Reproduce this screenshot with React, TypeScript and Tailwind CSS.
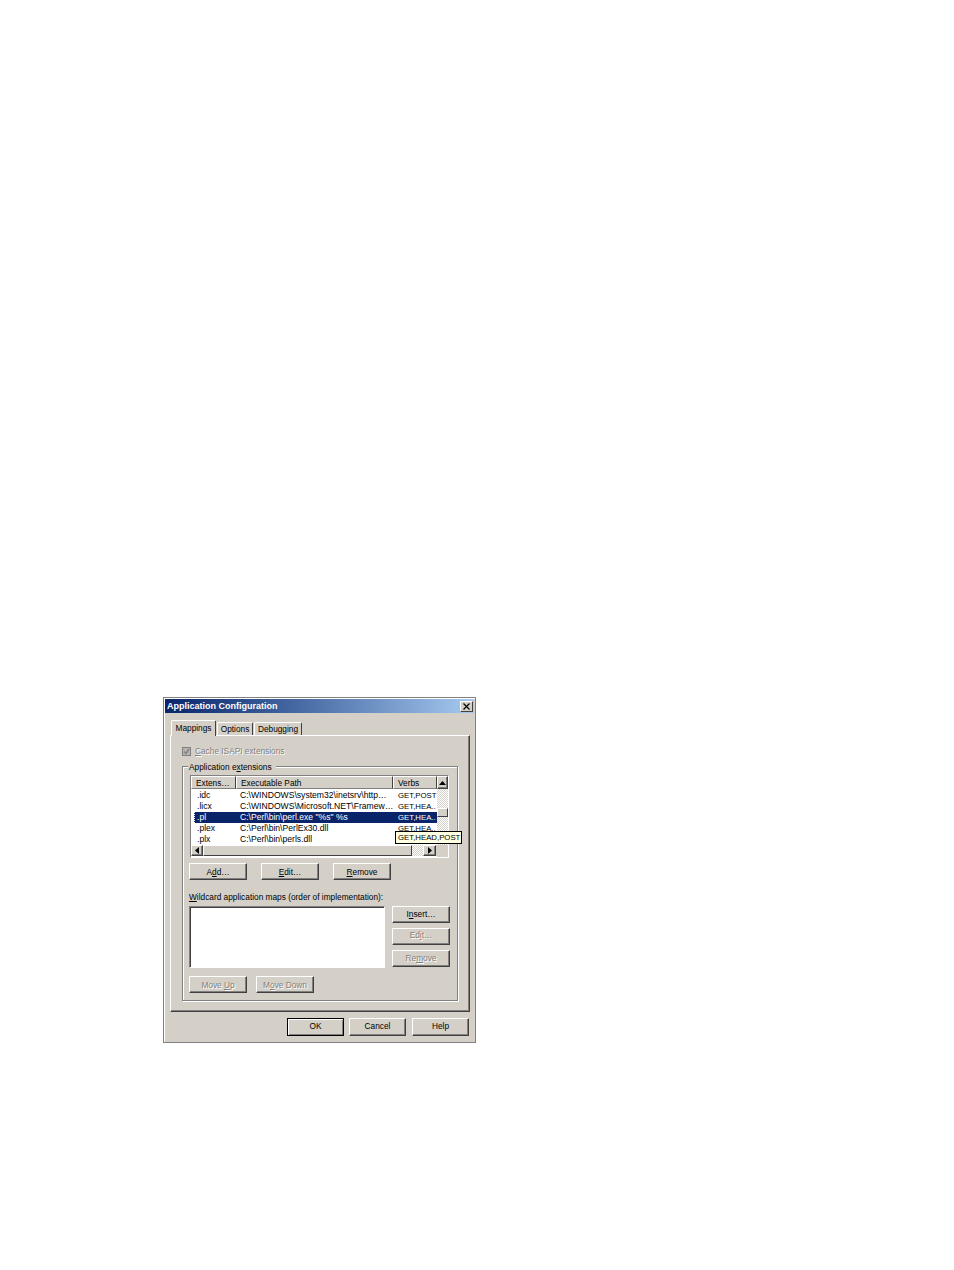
import type { ReactNode } from "react";

const FACE = "bg-[#d4d0c8]";
const DISABLED = "text-[#808080] [text-shadow:1px_1px_0_#ffffff]";

const rows = [
  { ext: ".idc", path: "C:\\WINDOWS\\system32\\inetsrv\\http…", verbs: "GET,POST" },
  { ext: ".licx", path: "C:\\WINDOWS\\Microsoft.NET\\Framew…", verbs: "GET,HEA.." },
  { ext: ".pl", path: "C:\\Perl\\bin\\perl.exe \"%s\" %s", verbs: "GET,HEA..", selected: true },
  { ext: ".plex", path: "C:\\Perl\\bin\\PerlEx30.dll", verbs: "GET,HEA.." },
  { ext: ".plx", path: "C:\\Perl\\bin\\perls.dll", verbs: "" },
];

function Btn({
  children,
  className = "w-[58px] h-[17px] pt-[2px]",
  disabled,
  isDefault,
}: {
  children: ReactNode;
  className?: string;
  disabled?: boolean;
  isDefault?: boolean;
}) {
  return (
    <div
      className={`flex shrink-0 items-center justify-center ${FACE} ${className} ${
        isDefault
          ? "border border-black [box-shadow:inset_1px_1px_0_#ffffff,inset_-1px_-1px_0_#808080]"
          : "border border-t-white border-l-white border-r-[#404040] border-b-[#404040] [box-shadow:inset_-1px_-1px_0_#808080]"
      } ${disabled ? DISABLED : ""}`}
    >
      <span>{children}</span>
    </div>
  );
}

function Arrow({ dir }: { dir: "up" | "left" | "right" }) {
  const points = dir === "up" ? "0,4 7,4 3.5,0" : dir === "left" ? "4,0 4,7 0,3.5" : "0,0 0,7 4,3.5";
  const size = dir === "up" ? "w-[7px] h-[4px]" : "w-[4px] h-[7px]";
  return (
    <svg className={size} viewBox={dir === "up" ? "0 0 7 4" : "0 0 4 7"}>
      <polygon points={points} fill="#000000" />
    </svg>
  );
}

function ScrollBtn({ dir, className }: { dir: "up" | "left" | "right"; className: string }) {
  return (
    <div
      className={`flex shrink-0 items-center justify-center ${FACE} ${className} border border-t-white border-l-white border-r-[#404040] border-b-[#404040] [box-shadow:inset_-1px_-1px_0_#808080]`}
    >
      <Arrow dir={dir} />
    </div>
  );
}

function HeaderCell({ children, className }: { children: ReactNode; className: string }) {
  return (
    <div
      className={`flex h-[13px] shrink-0 items-center pl-[4px] pt-px border-t border-l border-t-white border-l-white border-r border-r-[#404040] border-b border-b-[#808080] ${className}`}
    >
      {children}
    </div>
  );
}

function ExtensionList() {
  const dither = "bg-[repeating-conic-gradient(#ffffff_0%_25%,#d4d0c8_0%_50%)] bg-[length:2px_2px]";
  return (
    <div className="relative ml-px h-[83px] w-[259px] border border-t-[#808080] border-l-[#808080] border-r-white border-b-white bg-white">
      <div className="flex h-full">
        <div className="flex w-[246px] flex-col">
          <div className={`flex ${FACE}`}>
            <HeaderCell className="w-[45px]">Extens…</HeaderCell>
            <HeaderCell className="w-[157px]">Executable Path</HeaderCell>
            <HeaderCell className="w-[44px]">Verbs</HeaderCell>
          </div>
          <div className="flex flex-col pt-px text-[8.6px]">
            {rows.map((r) => (
              <div key={r.ext} className="flex h-[11px] items-center pl-[3px] leading-none">
                <div
                  className={`flex h-full w-[243px] items-center overflow-hidden ${
                    r.selected ? "border-l border-dotted border-white bg-[#0a246a] text-white" : "border-l border-transparent"
                  }`}
                >
                  <span className="w-[45px] shrink-0 pl-[2px]">{r.ext}</span>
                  <span className="w-[158px] shrink-0 whitespace-nowrap">{r.path}</span>
                  <span className="whitespace-nowrap text-[7.8px]">{r.verbs}</span>
                </div>
              </div>
            ))}
          </div>
          <div className={`mt-auto mb-px flex h-[11px] ${FACE}`}>
            <ScrollBtn dir="left" className="w-[12px]" />
            <div className={`w-[209px] shrink-0 ${FACE} border border-t-white border-l-white border-r-[#404040] border-b-[#404040]`} />
            <div className={`w-[11px] shrink-0 ${dither}`} />
            <ScrollBtn dir="right" className="w-[13px]" />
          </div>
        </div>
        <div className="flex w-[12px] flex-col">
          <ScrollBtn dir="up" className="h-[13px]" />
          <div className={`h-[19px] ${dither}`} />
          <div className={`h-[9px] ${FACE} border border-t-white border-l-white border-r-[#404040] border-b-[#404040]`} />
          <div className={`flex-1 ${dither}`} />
          <div className={`h-[12px] ${FACE}`} />
        </div>
      </div>
      <div className="absolute left-[204px] top-[55px] flex h-[13px] w-[67px] items-center whitespace-nowrap border border-black bg-[#ffffe1] pl-[2px] text-[7.8px]">
        GET,HEAD,POST
      </div>
    </div>
  );
}

function Tab({ children, active, className }: { children: ReactNode; active?: boolean; className: string }) {
  return (
    <div
      className={`flex shrink-0 items-center justify-center rounded-t-[2px] border-t border-l border-t-white border-l-white border-r border-r-[#404040] ${FACE} ${className} ${
        active ? "relative z-10 -mb-px h-[16px]" : "h-[13px]"
      }`}
    >
      {children}
    </div>
  );
}

export default function App() {
  return (
    <div
      className="min-h-[1270px] bg-white pl-[163px] pt-[697px] text-[8.3px] leading-none text-black"
      style={{ fontFamily: '"Liberation Sans", Arial, sans-serif' }}
    >
      <div className={`h-[346px] w-[313px] border border-[#808080] ${FACE} [box-shadow:inset_1px_1px_0_#ffffff]`}>
        {/* title bar */}
        <div className="ml-px mt-px flex h-[14px] w-[309px] items-center justify-between bg-gradient-to-r from-[#0a246a] to-[#a6caf0] pl-[2px] pr-px">
          <span className="text-[9px] font-bold text-white">Application Configuration</span>
          <div className={`flex h-[11px] w-[13px] items-center justify-center ${FACE} border border-t-white border-l-white border-r-[#404040] border-b-[#404040]`}>
            <svg className="h-[7px] w-[7px]" viewBox="0 0 7 7">
              <path d="M0.5 0.5 L6.5 6.5 M6.5 0.5 L0.5 6.5" stroke="#000000" strokeWidth="1.2" />
            </svg>
          </div>
        </div>

        {/* tabs */}
        <div className="ml-[7px] mt-[7px] flex h-[15px] items-end">
          <Tab active className="w-[45px]">Mappings</Tab>
          <Tab className="ml-px w-[36px]">Options</Tab>
          <Tab className="ml-px w-[48px]">Debugging</Tab>
        </div>

        {/* tab panel */}
        <div className="ml-[6px] h-[277px] w-[300px] border border-t-white border-l-white border-r-[#404040] border-b-[#404040] [box-shadow:inset_-1px_-1px_0_#808080]">
          <div className="ml-[11px] mt-[11px] flex h-[9px] items-center gap-[4px]">
            <div className="flex h-[9px] w-[9px] items-center justify-center bg-[#b8b4ac] border border-[#808080]">
              <svg className="h-[7px] w-[7px]" viewBox="0 0 7 7">
                <path d="M1 3.5 L3 5.5 L6 1" fill="none" stroke="#808080" strokeWidth="1.4" />
              </svg>
            </div>
            <span className={DISABLED}>
              <u>C</u>ache ISAPI extensions
            </span>
          </div>

          {/* group box */}
          <div className="relative ml-[11px] mt-[10px] h-[235px] w-[276px] border border-[#808080] pl-[6px] pt-[8px] [box-shadow:1px_1px_0_#ffffff,inset_1px_1px_0_#ffffff]">
            <span className={`absolute -top-[4px] left-[5px] pl-px pr-[4px] ${FACE}`}>
              Application e<u>x</u>tensions
            </span>
            <ExtensionList />
            <div className="mt-[5px] flex gap-[14px]">
              <Btn>
                A<u>d</u>d…
              </Btn>
              <Btn>
                <u>E</u>dit…
              </Btn>
              <Btn>
                <u>R</u>emove
              </Btn>
            </div>
            <div className="mt-[12px] flex h-[10px] items-center">
              <span>
                <u>W</u>ildcard application maps (order of implementation):
              </span>
            </div>
            <div className="mt-[4px] flex gap-[7px]">
              <div className="h-[62px] w-[196px] border border-t-[#808080] border-l-[#808080] border-r-white border-b-white bg-white [box-shadow:inset_1px_1px_0_#404040]" />
              <div className="flex flex-col gap-[5px]">
                <Btn className="h-[17px] w-[58px]">
                  I<u>n</u>sert…
                </Btn>
                <Btn disabled className="h-[17px] w-[58px] pb-[2px]">
                  Ed<u>i</u>t…
                </Btn>
                <Btn disabled className="h-[17px] w-[58px]">
                  Re<u>m</u>ove
                </Btn>
              </div>
            </div>
            <div className="mt-[8px] flex gap-[9px]">
              <Btn disabled>
                Move <u>U</u>p
              </Btn>
              <Btn disabled>
                M<u>o</u>ve Down
              </Btn>
            </div>
          </div>
        </div>

        {/* dialog buttons */}
        <div className="mt-[6px] flex justify-end pr-[6px]">
          <Btn isDefault className="h-[18px] w-[57px] pb-[2px]">OK</Btn>
          <Btn className="ml-[5px] h-[18px] w-[57px] pb-[2px]">Cancel</Btn>
          <Btn className="ml-[6px] h-[18px] w-[57px] pb-[2px]">Help</Btn>
        </div>
      </div>
    </div>
  );
}
